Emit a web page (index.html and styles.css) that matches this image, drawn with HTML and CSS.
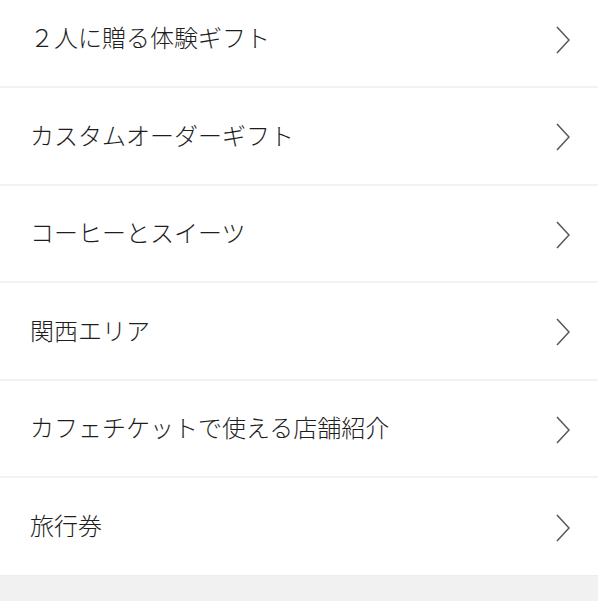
FILE: index.html
```html
<!DOCTYPE html>
<html lang="ja">
<head>
    <meta charset="UTF-8">
    <title>カテゴリ</title>
    <link rel="stylesheet" href="styles.css">
</head>
<body>
    <ul class="menu">
        <li class="menu-item"><span class="label">２人に贈る体験ギフト</span><svg class="chev" viewBox="0 0 14 28"><path d="M1 1 L13 14 L1 27"/></svg></li>
        <li class="menu-item"><span class="label">カスタムオーダーギフト</span><svg class="chev" viewBox="0 0 14 28"><path d="M1 1 L13 14 L1 27"/></svg></li>
        <li class="menu-item"><span class="label">コーヒーとスイーツ</span><svg class="chev" viewBox="0 0 14 28"><path d="M1 1 L13 14 L1 27"/></svg></li>
        <li class="menu-item"><span class="label">関西エリア</span><svg class="chev" viewBox="0 0 14 28"><path d="M1 1 L13 14 L1 27"/></svg></li>
        <li class="menu-item"><span class="label">カフェチケットで使える店舗紹介</span><svg class="chev" viewBox="0 0 14 28"><path d="M1 1 L13 14 L1 27"/></svg></li>
        <li class="menu-item"><span class="label">旅行券</span><svg class="chev" viewBox="0 0 14 28"><path d="M1 1 L13 14 L1 27"/></svg></li>
    </ul>
</body>
</html>
```

FILE: styles.css
```css
html, body {
    margin: 0;
    padding: 0;
    background-color: #f1f1f1;
    font-family: "Noto Sans CJK JP", "Noto Sans", sans-serif;
}
.menu {
    list-style: none;
    margin: -9.5px 0 0 0;
    padding: 0;
    background-color: white;
}
.menu-item {
    display: flex;
    align-items: center;
    justify-content: space-between;
    height: 95.5px;
    padding: 0 28px 0 30px;
    border-bottom: 2px solid #f2f2f2;
}
.menu-item:last-child {
    border-bottom: 1px solid #ececec;
    height: 96.5px;
}
.label {
    font-size: 24px;
    font-weight: 300;
    color: #1e1e1e;
    line-height: 30px;
    margin-bottom: 2px;
}
.chev {
    width: 14px;
    height: 28px;
    margin-top: 3px;
}
.chev path {
    fill: none;
    stroke: #5a5a5a;
    stroke-width: 1.6;
}
```
